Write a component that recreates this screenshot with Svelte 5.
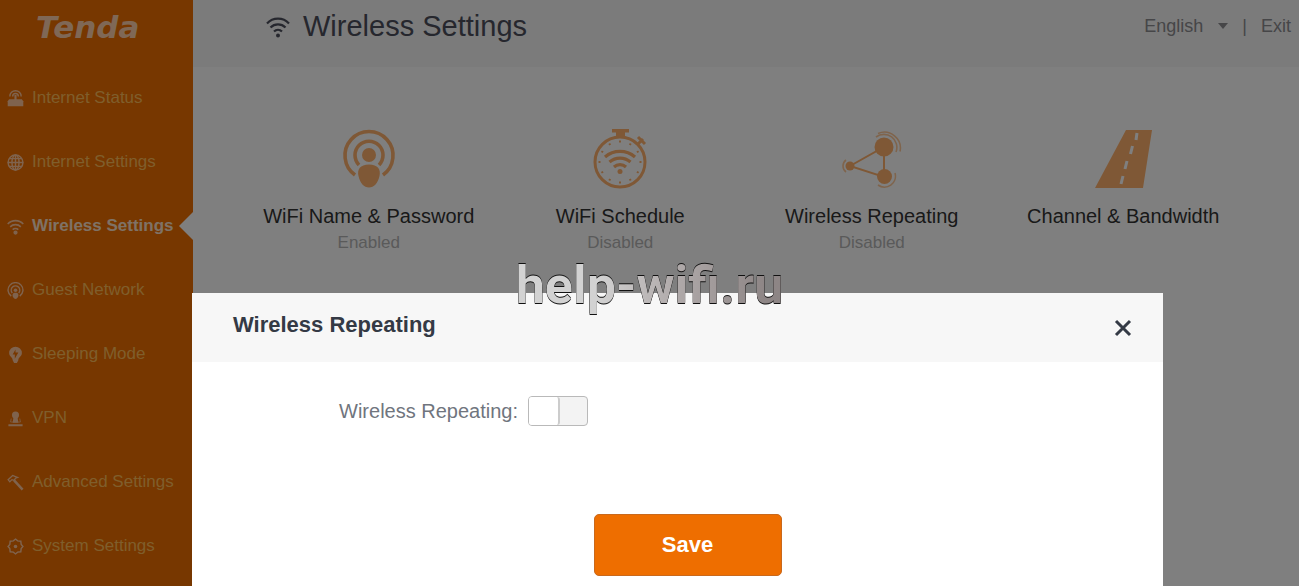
<script lang="ts">
  const nav = [
    { label: 'Internet Status', icon: 'router' },
    { label: 'Internet Settings', icon: 'globe' },
    { label: 'Wireless Settings', icon: 'wifi', active: true },
    { label: 'Guest Network', icon: 'guest' },
    { label: 'Sleeping Mode', icon: 'sleep' },
    { label: 'VPN', icon: 'vpn' },
    { label: 'Advanced Settings', icon: 'tool' },
    { label: 'System Settings', icon: 'gear' }
  ];

  const tiles = [
    { title: 'WiFi Name & Password', status: 'Enabled', icon: 'signal' },
    { title: 'WiFi Schedule', status: 'Disabled', icon: 'timer' },
    { title: 'Wireless Repeating', status: 'Disabled', icon: 'repeat' },
    { title: 'Channel & Bandwidth', status: '', icon: 'road' }
  ];

  // minute marks on the stopwatch dial
  const ticks = [0, 30, 60, 90, 120, 150, 180, 210, 240, 270, 300, 330];

  let repeating = $state(false);
  let open = $state(true);
</script>

{#snippet wifi()}
  <path d="M1 8.500a15 15 0 0 1 22 0M4.500 12.500a10.500 10.500 0 0 1 15 0M8 16.500a5.800 5.800 0 0 1 8 0" fill="none" stroke="currentColor" stroke-width="2.200" />
  <circle cx="12" cy="20.500" r="2" fill="currentColor" />
{/snippet}

<div class="page">
  <aside class="sidebar">
    <div class="logo">Tenda</div>
    <nav>
      {#each nav as item}
        <a class="nav-item" class:active={item.active} href="#{item.icon}">
          <svg class="nav-icon" viewBox="0 0 24 24" aria-hidden="true" fill="none" stroke="currentColor" stroke-width="2">
            {#if item.icon === 'router'}
              <path d="M4 9a8 8 0 0 1 16 0M8 9a4 4 0 0 1 8 0" />
              <path d="M3 13h18l2 3v7H1v-7z" fill="currentColor" stroke="none" />
              <path d="M12 7v8" stroke-width="3" />
            {:else if item.icon === 'globe'}
              <circle cx="12" cy="12" r="10.500" />
              <ellipse cx="12" cy="12" rx="5" ry="10.500" />
              <path d="M12 1v22M1 12h22M3 6.500h18M3 17.500h18" />
            {:else if item.icon === 'wifi'}
              {@render wifi()}
            {:else if item.icon === 'guest'}
              <path d="M6 20a10.500 10.500 0 1 1 12 0M7.500 15.500a6 6 0 1 1 9 0" />
              <circle cx="12" cy="11.500" r="2.500" fill="currentColor" stroke="none" />
              <path d="M12 15c4 0 5 3 3.500 6q-1.500 3-3.500 3t-3.500-3C7 18 8 15 12 15z" fill="currentColor" stroke="none" />
            {:else if item.icon === 'sleep'}
              <path fill-rule="evenodd" d="M12 1a9 9 0 0 1 9 9c0 5-5 6-5 10l-2 4h-4l-2-4c0-4-5-5-5-10a9 9 0 0 1 9-9zM12 5l-4 7h3v6l5-9h-4z" fill="currentColor" stroke="none" />
            {:else if item.icon === 'vpn'}
              <circle cx="12" cy="7" r="5" fill="currentColor" stroke="none" />
              <path d="M9 11h6l1 7H8zM2 20h20v3H2z" fill="currentColor" stroke="none" />
              <path d="M6 12l-1 5h14l-1-5" stroke-width="1" />
            {:else if item.icon === 'tool'}
              <path d="M1.500 8L8 2l7 3-3 1-2 3-3-1-3 3z" stroke-width="1.800" />
              <path d="M10 9l12 13" stroke-width="3.500" />
            {:else}
              <path d="M12 1.500l3 2.500 4.500.5.500 4.500 2.500 3-2.500 3-.5 4.500-4.500.5-3 2.500-3-2.500-4.500-.5L4 15l-2.500-3L4 9l.5-4.500L9 4z" />
              <circle cx="12" cy="12" r="2.500" fill="currentColor" stroke="none" />
            {/if}
          </svg>
          <span>{item.label}</span>
        </a>
      {/each}
    </nav>
  </aside>

  <div class="main">
    <header class="topbar">
      <h1>
        <svg class="title-icon" viewBox="0 0 24 24" aria-hidden="true">{@render wifi()}</svg>
        Wireless Settings
      </h1>
      <div class="account">
        <div class="language">
          <select aria-label="Language">
            <option>English</option>
          </select>
          <svg class="caret" viewBox="0 0 10 6" aria-hidden="true"><path d="M0 0h10L5 6z" fill="currentColor" /></svg>
        </div>
        <span>|</span>
        <a href="#exit">Exit</a>
      </div>
    </header>

    <main class="tiles">
      {#each tiles as tile}
        <a class="tile" href="#{tile.icon}">
          <svg class="tile-icon" viewBox="0 0 60 60" aria-hidden="true" fill="none" stroke="currentColor">
            {#if tile.icon === 'signal'}
              <path d="M16 46a24 24 0 1 1 28 0M20 36a14 14 0 1 1 20 0" stroke-width="3.600" />
              <circle cx="30" cy="26" r="7" fill="currentColor" stroke="none" />
              <path d="M30 35.500c9 0 12 5 10.500 11.500C39 54 35 58.500 30 58.500S21 54 19.500 47C18 40.500 21 35.500 30 35.500z" fill="currentColor" stroke="none" />
            {:else if tile.icon === 'timer'}
              <circle cx="30" cy="33" r="25" stroke-width="3" />
              <path d="M22 0h17v3.500h-4V8h-9V3.500h-4z" fill="currentColor" stroke="none" />
              <path d="M47 16l6-6M48 8l7 7" stroke-width="3" />
              {#each ticks as angle}
                <path d="M30 11.500v2" stroke-width="2" transform="rotate({angle} 30 33)" />
              {/each}
              <path d="M15 28a23 23 0 0 1 30 0M19.500 33a16 16 0 0 1 21 0M24 38a9 9 0 0 1 12 0" stroke-width="3.200" />
              <circle cx="30" cy="42.500" r="2.500" fill="currentColor" stroke="none" />
            {:else if tile.icon === 'repeat'}
              <path d="M8 37l34-19v30z" stroke-width="2" />
              <circle cx="42" cy="18" r="9.500" fill="currentColor" stroke="none" />
              <circle cx="42.500" cy="47.500" r="7.500" fill="currentColor" stroke="none" />
              <circle cx="8" cy="37" r="4.500" fill="currentColor" stroke="none" />
              <path d="M34 8a13 13 0 0 1 20 15M36 4.500a16 16 0 0 1 22 18M53 44a11 11 0 0 1-17 12M4 31a7.500 7.500 0 0 0 0 12" stroke-width="1.600" opacity="0.700" />
            {:else}
              <path d="M33 1h26L50 59H2z" fill="currentColor" stroke="none" />
              <path class="lane" d="M44 4l-1 7M39.500 17l-2 8M34 32l-2 8M30 47l-2 8" stroke-width="3" />
            {/if}
          </svg>
          <span class="tile-title">{tile.title}</span>
          <span class="tile-status">{tile.status}</span>
        </a>
      {/each}
    </main>
  </div>
</div>

{#if open}
  <div class="overlay">
    <div class="modal" role="dialog" aria-labelledby="modal-title">
      <div class="modal-head">
        <h2 id="modal-title">Wireless Repeating</h2>
        <button class="close" type="button" aria-label="Close" onclick={() => (open = false)}>
          <svg viewBox="0 0 18 18" aria-hidden="true"><path d="M2 2l14 14M16 2L2 16" stroke="currentColor" stroke-width="3" /></svg>
        </button>
      </div>
      <form class="modal-body" onsubmit={(e) => e.preventDefault()}>
        <div class="field">
          <label for="repeating">Wireless Repeating:</label>
          <input id="repeating" class="switch" type="checkbox" role="switch" bind:checked={repeating} />
        </div>
        <button class="save" type="submit">Save</button>
      </form>
    </div>
  </div>
{/if}

<div class="watermark">help-wifi.ru</div>

<style>
  :global(body) {
    margin: 0;
    font-family: "Liberation Sans", Arial, sans-serif;
    background: #fff;
  }
  a { color: inherit; text-decoration: none; }
  h1, h2 { margin: 0; }

  .page {
    display: flex;
    height: 100vh;
    overflow: hidden;
  }

  /* Sidebar */
  .sidebar {
    flex: none;
    width: 193px;
    background: #ee6e00;
  }
  .logo {
    height: 66px;
    box-sizing: border-box;
    padding: 7px 0 0 36px;
    font: italic bold 31px/40px "DejaVu Sans", sans-serif;
    color: #ffd0ac;
  }
  .nav-item {
    position: relative;
    display: flex;
    align-items: center;
    gap: 8px;
    height: 64px;
    padding-left: 7px;
    font-size: 17px;
    white-space: nowrap;
    color: #ffbc58;
  }
  .nav-icon {
    flex: none;
    width: 17px;
    height: 17px;
    color: #ffc79c;
  }
  .nav-item.active { font-weight: bold; color: #ffe4cc; }
  .nav-item.active::after {
    content: '';
    position: absolute;
    right: 0;
    border: 14px solid transparent;
    border-left-width: 0;
    border-right-color: #fff;
  }

  /* Main area */
  .main { flex: 1; min-width: 0; }
  .topbar {
    display: flex;
    align-items: center;
    justify-content: space-between;
    height: 67px;
    box-sizing: border-box;
    padding: 0 8px 14px 73px;
    background: #f7f7f7;
  }
  h1 {
    display: flex;
    align-items: center;
    gap: 13px;
    font-size: 29px;
    font-weight: normal;
    color: #4c4f5c;
  }
  .title-icon { width: 24px; height: 24px; }
  .account {
    display: flex;
    align-items: baseline;
    gap: 14px;
    font-size: 18px;
    color: #8c8c90;
  }
  .language { display: flex; align-items: center; gap: 14px; }
  .language select {
    appearance: none;
    padding: 0;
    border: 0;
    background: none;
    font: inherit;
    color: inherit;
  }
  .caret { width: 10px; height: 6px; }

  .tiles {
    display: grid;
    grid-template-columns: repeat(4, 1fr);
    padding: 62px 50px 0;
  }
  .tile {
    display: flex;
    flex-direction: column;
    align-items: center;
    white-space: nowrap;
  }
  .tile-icon {
    width: 60px;
    height: 60px;
    margin-bottom: 13px;
    color: #ffb16c;
  }
  .lane { stroke: #fff; }
  .tile-title { font-size: 20px; line-height: 28px; color: #333; }
  .tile-status { font-size: 17px; line-height: 26px; color: #b4b4b4; }

  /* Dialog */
  .overlay {
    position: fixed;
    inset: 0;
    overflow: hidden;
    padding: 293px 136px 0 192px;
    background: rgba(0, 0, 0, 0.5);
  }
  .modal { background: #fff; }
  .modal-head {
    display: flex;
    align-items: center;
    justify-content: space-between;
    height: 69px;
    box-sizing: border-box;
    padding: 0 31px 0 41px;
    background: #f7f7f7;
    color: #343a45;
  }
  h2 { padding-bottom: 6px; font-size: 22px; }
  .close {
    padding: 0;
    border: 0;
    background: none;
    color: inherit;
    cursor: pointer;
  }
  .close svg { display: block; width: 18px; height: 18px; }
  .modal-body {
    display: flex;
    flex-direction: column;
    gap: 88px;
    padding: 34px 0 40px;
  }
  .field {
    display: flex;
    align-items: center;
    gap: 10px;
    font-size: 20px;
    line-height: 30px;
    color: #70757e;
  }
  .field label { width: 326px; text-align: right; }
  .switch {
    appearance: none;
    width: 60px;
    height: 30px;
    margin: 0;
    border: 1px solid #b9b9b9;
    border-radius: 4px;
    background: #f3f3f3;
    cursor: pointer;
  }
  .switch::before {
    content: '';
    display: block;
    width: 29px;
    height: 28px;
    border-right: 2px solid #ccc;
    border-radius: 3px;
    background: #fff;
  }
  .switch:checked { background: #ee6e00; }
  .switch:checked::before { margin-left: auto; }
  .save {
    align-self: center;
    width: 188px;
    height: 62px;
    margin-left: 20px;
    border: 1px solid #c9691c;
    border-radius: 5px;
    background: #ee6e00;
    font: bold 22px "Liberation Sans", Arial, sans-serif;
    color: #fff;
    cursor: pointer;
  }

  .watermark {
    position: fixed;
    top: 251px;
    left: 0;
    right: 0;
    font: bold 52px/70px Roboto, sans-serif;
    text-align: center;
    color: transparent;
    background: linear-gradient(90deg, #d2d2d2 46%, #b0aaaa 52%, #8d8585 59%);
    background-clip: text;
    filter: drop-shadow(0 1px 0 #111) drop-shadow(0 -1px 0 #111);
    pointer-events: none;
  }
</style>
